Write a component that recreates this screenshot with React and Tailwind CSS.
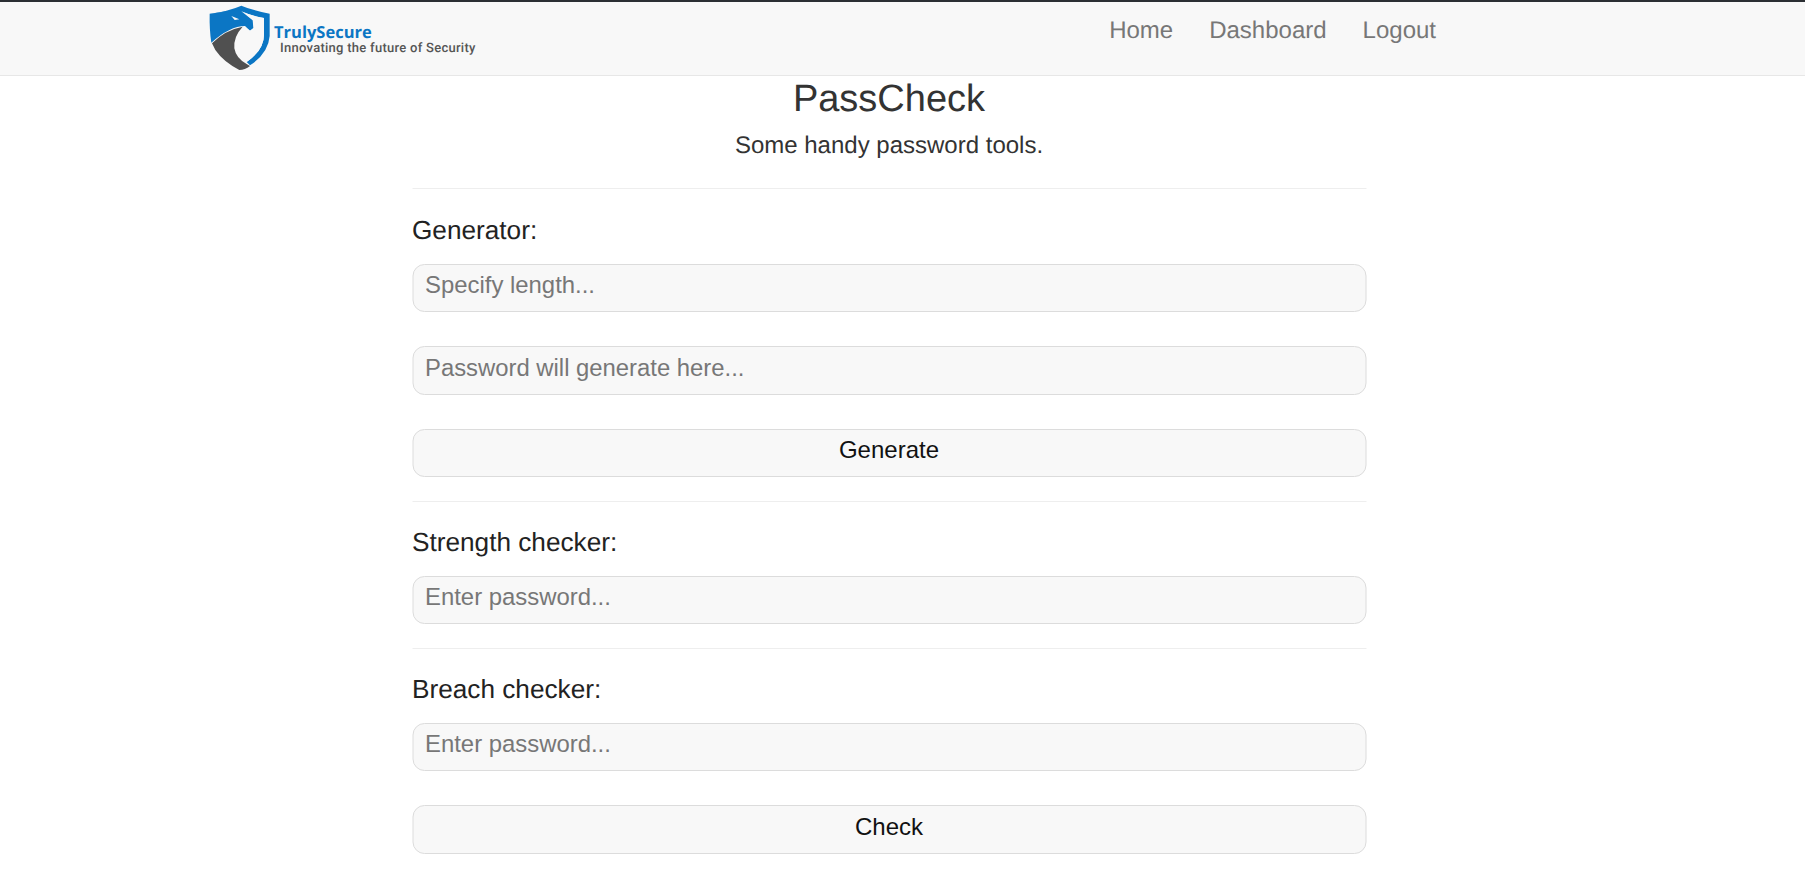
import React from "react";

function Logo() {
  return (
    <svg width="80" height="75" viewBox="0 0 240 225" className="-mt-[3px] shrink-0">
      {/* shield */}
      <path d="M29 41 Q85 34 124 17 Q160 32 209 41 L209 108 Q205 160 150 196 L140 186 Q192 150 192 104 L192 54 Q160 50 122 33 Z" fill="#0b76c4" />
      <path d="M29 41 Q85 34 122 28 L158 60 L160 84 L150 92 L135 78 Q90 78 34 128 Q28 90 29 41 Z" fill="#0b76c4" />
      <path d="M124 34 Q155 48 192 54 L192 104 Q192 150 140 186 Q105 150 125 105 L135 82 L150 92 L162 84 L160 62 Z" fill="#f8f8f8" />
      {/* eye */}
      <path d="M94 48 L118 58 L104 60 Z" fill="#f8f8f8" />
      {/* grey crescent */}
      <path d="M36 130 Q75 90 128 80 Q100 110 103 145 Q108 175 140 192 L150 198 Q135 210 118 210 Q70 185 46 150 Z" fill="#505050" />
    </svg>
  );
}

function Field({ placeholder, tall }) {
  return (
    <input
      placeholder={placeholder}
      className={
        tall
          ? "block h-[49px] w-full rounded-xl border border-[#dcdcdc] bg-[#f8f8f8] px-3 pb-[6px] text-[23.85px] text-[#222] placeholder:text-[#777]"
          : "block h-12 w-full rounded-xl border border-[#dcdcdc] bg-[#f8f8f8] px-3 pb-[6px] text-[23.9px] text-[#222] placeholder:text-[#777]"
      }
    />
  );
}

function Btn({ children, tall }) {
  return (
    <button
      className={
        tall
          ? "block h-[49px] w-full rounded-xl border border-[#dcdcdc] bg-[#f8f8f8] pb-[6px] text-[24px] text-[#111]"
          : "block h-12 w-full rounded-xl border border-[#dcdcdc] bg-[#f8f8f8] pb-[6px] text-[24px] text-[#111]"
      }
    >
      {children}
    </button>
  );
}

export default function App() {
  return (
    <div className="font-['Liberation_Sans',Arial,sans-serif] [text-rendering:geometricPrecision]">
      {/* Navbar */}
      <nav className="h-[76px] border-t-2 border-b border-t-[#2b2f33] border-b-[#e7e7e7] bg-[#f8f8f8]">
        <div className="flex h-full pl-[200px] pr-[369px]">
          <a className="flex items-start pt-px">
            <Logo />
            <div className="-ml-[6px] pt-[19px]">
              <div className="font-['Open_Sans',sans-serif] text-[16.5px] leading-[20px] font-bold text-[#0b76c4]">TrulySecure</div>
              <div className="ml-[6px] -mt-[1px] font-['Roboto',sans-serif] text-[13px] leading-[16px] font-medium tracking-[0.27px] text-[#555]">Innovating the future of Security</div>
            </div>
          </a>
          <ul className="ml-auto flex gap-9 pt-[13px] text-[24px] leading-[32px] text-[#777]">
            <li>Home</li>
            <li>Dashboard</li>
            <li>Logout</li>
          </ul>
        </div>
      </nav>

      <main className="mx-auto w-[954px] -translate-x-[13.5px]">
        <div className="text-center text-[#333]">
          <h1 className="pt-px text-[38px] leading-[44px]">PassCheck</h1>
          <p className="mt-[8px] text-[24px] leading-[34px]">Some handy password tools.</p>
        </div>
        <hr className="mt-[25px] border-[#eee]" />

        <h3 className="mt-[25px] text-[26.2px] leading-[32px] text-[#222]">Generator:</h3>
        <div className="mt-[18px] flex flex-col gap-[34px]">
          <Field placeholder="Specify length..." />
          <Field tall placeholder="Password will generate here..." />
          <Btn>Generate</Btn>
        </div>
        <hr className="mt-6 border-[#eee]" />

        <h3 className="mt-[24px] text-[26.2px] leading-[32px] text-[#222]">Strength checker:</h3>
        <div className="mt-[18px]">
          <Field placeholder="Enter password..." />
        </div>
        <hr className="mt-6 border-[#eee]" />

        <h3 className="mt-[24px] text-[26.2px] leading-[32px] text-[#222]">Breach checker:</h3>
        <div className="mt-[18px] flex flex-col gap-[34px]">
          <Field placeholder="Enter password..." />
          <Btn tall>Check</Btn>
        </div>
      </main>
    </div>
  );
}
